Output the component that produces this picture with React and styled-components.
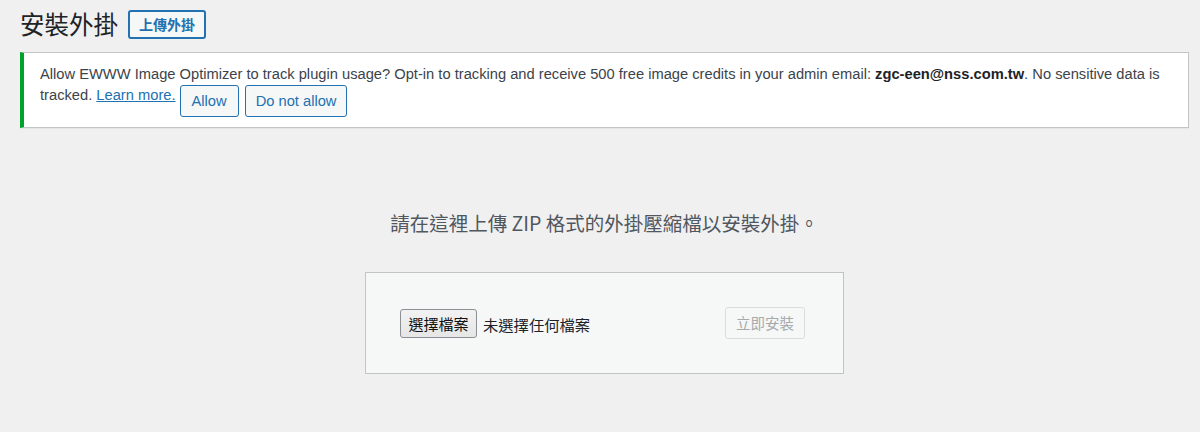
import React from "react";
import styled, { createGlobalStyle } from "styled-components";

const Global = createGlobalStyle`
  html, body { margin: 0; padding: 0; background: #f0f0f1; }
  body {
    font-family: "Liberation Sans", "Noto Sans CJK TC", sans-serif;
    color: #3c434a;
    -webkit-font-smoothing: antialiased;
  }
`;

const Wrap = styled.div`
  padding: 0 11px 0 20px;
  width: 1200px;
  box-sizing: border-box;
`;

const TitleRow = styled.div`
  display: flex;
  align-items: center;
  gap: 10px;
  height: 52px;
  padding-bottom: 3px;
  box-sizing: border-box;
`;

const Title = styled.h1`
  margin: 0;
  font-family: "Noto Sans CJK TC", sans-serif;
  font-size: 24.5px;
  font-weight: 400;
  color: #1d2327;
  line-height: 1;
`;

const OutlineButton = styled.button`
  box-sizing: border-box;
  height: ${(p) => p.$h || 30}px;
  padding: 0 ${(p) => p.$px || 10}px;
  border: ${(p) => p.$bw || 1}px solid #2271b1;
  border-radius: 3px;
  background: #f6f7f7;
  color: #2271b1;
  font-family: "Liberation Sans", "Noto Sans CJK TC", sans-serif;
  font-size: ${(p) => p.$fs || 14.7}px;
  font-weight: ${(p) => (p.$bold ? 700 : 400)};
  line-height: 1;
  cursor: pointer;
  vertical-align: middle;
`;

const Notice = styled.div`
  box-sizing: border-box;
  height: 76px;
  background: #fff;
  border: 1px solid #c3c4c7;
  border-left: 4px solid #00a32a;
  box-shadow: 0 1px 1px rgba(0, 0, 0, 0.04);
  padding: 11px 20px 0 16px;
`;

const NoticeText = styled.p`
  margin: 0;
  font-size: 14.7px;
  line-height: 21px;
  color: #3c434a;
`;

const Bold = styled.strong`
  font-weight: 700;
  color: #1d2327;
`;

const Link = styled.a`
  color: #2271b1;
  text-decoration: underline;
`;

const NoticeActions = styled.span`
  display: inline-flex;
  gap: 6px;
  margin-left: 4px;
  vertical-align: -6px;
`;

const Upload = styled.div`
  display: flex;
  flex-direction: column;
  align-items: center;
`;

const Help = styled.p`
  margin: 0;
  padding: 82px 0 36px;
  font-family: "Noto Sans CJK TC", sans-serif;
  font-size: 19.5px;
  line-height: 26px;
  color: #50575e;
`;

const Form = styled.div`
  box-sizing: border-box;
  width: 479px;
  height: 102px;
  display: flex;
  align-items: center;
  justify-content: space-between;
  padding: 0 38px 0 34px;
  background: #f6f7f7;
  border: 1px solid #c3c4c7;
`;

const FileRow = styled.div`
  display: flex;
  align-items: center;
  gap: 6px;
  margin-top: 1px;
`;

const FileButton = styled.button`
  box-sizing: border-box;
  width: 77px;
  height: 29px;
  padding: 0;
  border: 1px solid #8c8f94;
  border-radius: 3px;
  background: linear-gradient(#f2f2f2, #e6e6e6);
  color: #111;
  font-family: "Noto Sans CJK TC", sans-serif;
  font-size: 15px;
  line-height: 1;
`;

const FileLabel = styled.span`
  font-family: "Noto Sans CJK TC", sans-serif;
  font-size: 15.3px;
  color: #1d2327;
`;

const DisabledButton = styled.button`
  box-sizing: border-box;
  width: 80px;
  height: 32px;
  padding: 0;
  border: 1px solid #dcdcde;
  border-radius: 3px;
  background: #f6f7f7;
  color: #a7aaad;
  font-family: "Noto Sans CJK TC", sans-serif;
  font-size: 14.5px;
  line-height: 1;
`;

export default function App() {
  return (
    <>
      <Global />
      <Wrap>
        <TitleRow>
          <Title>安裝外掛</Title>
          <OutlineButton $h={29} $px={9} $bw={2} $fs={14} $bold>
            上傳外掛
          </OutlineButton>
        </TitleRow>
        <Notice>
          <NoticeText>
            Allow EWWW Image Optimizer to track plugin usage? Opt-in to tracking and receive 500 free image credits in your admin email:{" "}
            <Bold>zgc-een@nss.com.tw</Bold>. No sensitive data is tracked.{" "}
            <Link href="#">Learn more.</Link>
            <NoticeActions>
              <OutlineButton $h={32} $px={11}>Allow</OutlineButton>
              <OutlineButton $h={32} $px={10}>Do not allow</OutlineButton>
            </NoticeActions>
          </NoticeText>
        </Notice>
        <Upload>
          <Help>請在這裡上傳 ZIP 格式的外掛壓縮檔以安裝外掛。</Help>
          <Form>
            <FileRow>
              <FileButton>選擇檔案</FileButton>
              <FileLabel>未選擇任何檔案</FileLabel>
            </FileRow>
            <DisabledButton disabled>立即安裝</DisabledButton>
          </Form>
        </Upload>
      </Wrap>
    </>
  );
}
